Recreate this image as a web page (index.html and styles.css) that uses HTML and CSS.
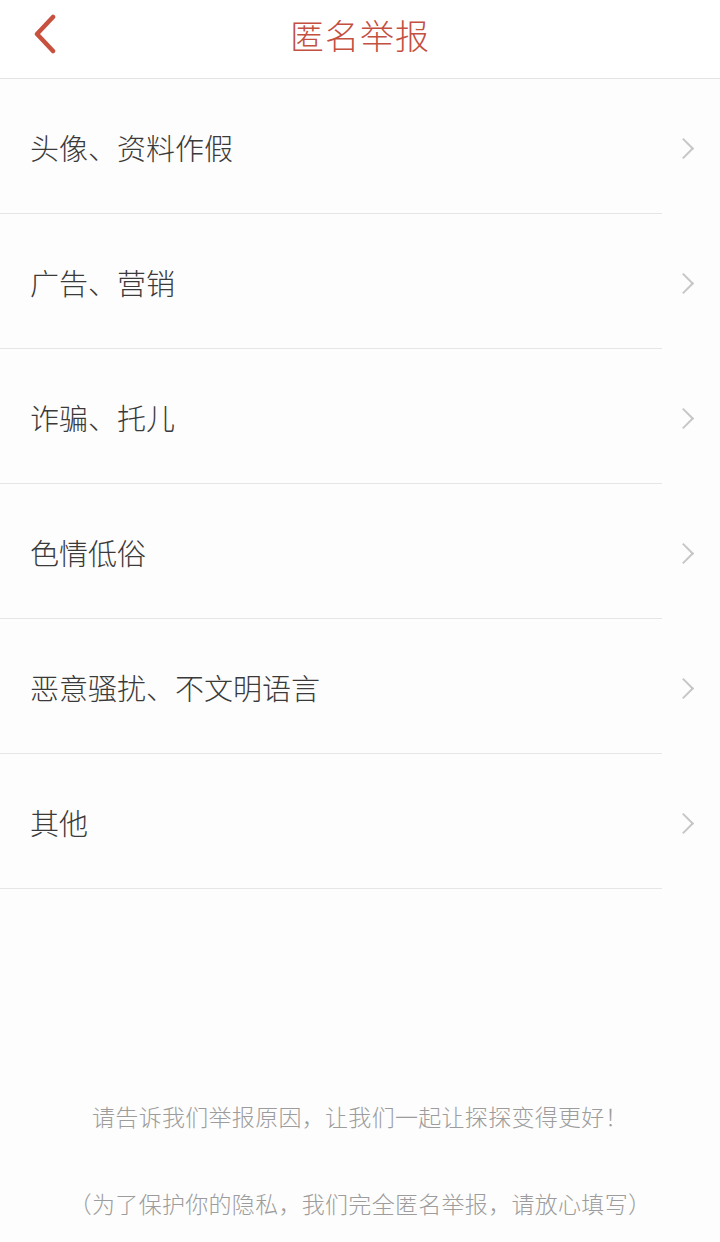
FILE: index.html
```html
<!DOCTYPE html>
<html lang="zh-CN">
<head>
  <meta charset="UTF-8" />
  <meta name="viewport" content="width=device-width, initial-scale=1.0"/>
  <title>匿名举报</title>
  <link rel="stylesheet" href="styles.css">
</head>
<body>
  <header class="topbar">
    <a class="back" href="#">
      <svg width="26" height="40" viewBox="0 0 26 40">
        <path d="M22 3 L6 20 L22 37" fill="none" stroke="#c8503e" stroke-width="4.5" stroke-linecap="round" stroke-linejoin="round"/>
      </svg>
    </a>
    <h1>匿名举报</h1>
  </header>

  <ul class="reasons">
    <li><span>头像、资料作假</span><i class="arrow"></i></li>
    <li><span>广告、营销</span><i class="arrow"></i></li>
    <li><span>诈骗、托儿</span><i class="arrow"></i></li>
    <li><span>色情低俗</span><i class="arrow"></i></li>
    <li><span>恶意骚扰、不文明语言</span><i class="arrow"></i></li>
    <li><span>其他</span><i class="arrow"></i></li>
  </ul>

  <footer class="note">
    <p>请告诉我们举报原因，让我们一起让探探变得更好！</p>
    <p>（为了保护你的隐私，我们完全匿名举报，请放心填写）</p>
  </footer>
</body>
</html>
```

FILE: styles.css
```css
body {
  font-family: "Noto Sans CJK SC", "Noto Sans", sans-serif;
  background: #fdfdfd;
  margin: 0;
  padding: 0;
  color: #3a3a3a;
}
.topbar {
  position: relative;
  height: 78px;
  background: #fff;
  border-bottom: 1px solid #e4e4e4;
  display: flex;
  align-items: center;
  justify-content: center;
}
.topbar h1 {
  margin: 0;
  font-size: 34px;
  font-weight: 300;
  color: #c4503f;
  letter-spacing: 1px;
  line-height: 1;
  margin-top: -8px;
}
.back {
  position: absolute;
  left: 31px;
  top: 14px;
  display: block;
  line-height: 0;
}
.reasons {
  list-style: none;
  margin: 0;
  padding: 0;
}
.reasons li {
  height: 134px;
  display: flex;
  align-items: center;
  justify-content: space-between;
  padding: 0 27px 0 30px;
  position: relative;
}
.reasons li::after {
  content: "";
  position: absolute;
  left: 0;
  bottom: -1px;
  width: 662px;
  height: 1px;
  background: #e6e6e6;
}
.reasons li + li {
  margin-top: 1px;
}
.reasons span {
  font-size: 29px;
  font-weight: 300;
  line-height: 1;
  margin-top: 2px;
}
.arrow {
  width: 13px;
  height: 13px;
  border-top: 2px solid #c6c6c6;
  border-right: 2px solid #c6c6c6;
  transform: rotate(45deg);
  margin-top: 4px;
  margin-right: 2px;
}
.note {
  margin-top: 212px;
  text-align: center;
  color: #9c9c9c;
  font-size: 23px;
  font-weight: 300;
}
.note p {
  margin: 0;
  line-height: 32px;
  letter-spacing: 0.3px;
}
.note p + p {
  margin-top: 55px;
}
```
